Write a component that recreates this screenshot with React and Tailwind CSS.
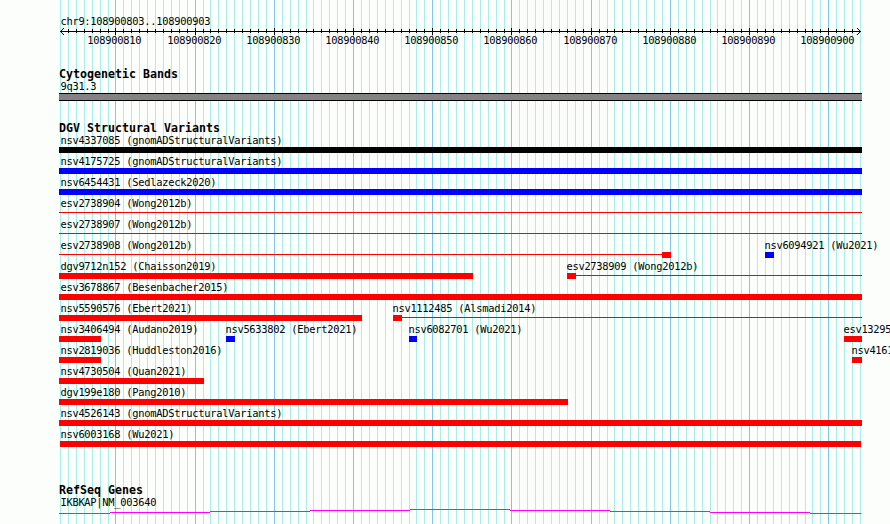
import React from "react";

const GRID = Array.from({ length: 102 }, (_, k) => ({
  x: 60 + Math.round((800 / 101) * k),
  major: k % 10 === 7,
  pos: 108900803 + k,
}));

const RED = "bg-[#ff0000]";
const BLUE = "bg-[#0000ff]";
const BLACK = "bg-black";

// Each feature: label, label x, then segments [start, end, colour, thin]
const ROWS = [
  [{ t: "nsv4337085 (gnomADStructuralVariants)", x: 60, s: [[59, 862, BLACK]] }],
  [{ t: "nsv4175725 (gnomADStructuralVariants)", x: 60, s: [[59, 862, BLUE]] }],
  [{ t: "nsv6454431 (Sedlazeck2020)", x: 60, s: [[59, 862, BLUE]] }],
  [{ t: "esv2738904 (Wong2012b)", x: 60, s: [[59, 862, RED, true]] }],
  [{ t: "esv2738907 (Wong2012b)", x: 60, s: [[59, 862, RED, true]] }],
  [
    { t: "esv2738908 (Wong2012b)", x: 60, s: [[59, 662, RED, true], [662, 671, RED]] },
    { t: "nsv6094921 (Wu2021)", x: 764, s: [[765, 774, BLUE]] },
  ],
  [
    { t: "dgv9712n152 (Chaisson2019)", x: 60, s: [[59, 473, RED]] },
    { t: "esv2738909 (Wong2012b)", x: 566, s: [[567, 576, RED], [576, 862, RED, true]] },
  ],
  [{ t: "esv3678867 (Besenbacher2015)", x: 60, s: [[59, 862, RED]] }],
  [
    { t: "nsv5590576 (Ebert2021)", x: 60, s: [[59, 362, RED]] },
    { t: "nsv1112485 (Alsmadi2014)", x: 392, s: [[393, 402, RED], [402, 862, RED, true]] },
  ],
  [
    { t: "nsv3406494 (Audano2019)", x: 60, s: [[59, 101, RED]] },
    { t: "nsv5633802 (Ebert2021)", x: 225, s: [[226, 235, BLUE]] },
    { t: "nsv6082701 (Wu2021)", x: 408, s: [[409, 417, BLUE]] },
    { t: "esv13295", x: 843, s: [[844, 862, RED]] },
  ],
  [
    { t: "nsv2819036 (Huddleston2016)", x: 60, s: [[59, 101, RED]] },
    { t: "nsv4161", x: 851, s: [[852, 862, RED]] },
  ],
  [{ t: "nsv4730504 (Quan2021)", x: 60, s: [[59, 204, RED]] }],
  [{ t: "dgv199e180 (Pang2010)", x: 60, s: [[59, 568, RED]] }],
  [{ t: "nsv4526143 (gnomADStructuralVariants)", x: 60, s: [[59, 862, RED]] }],
  [{ t: "nsv6003168 (Wu2021)", x: 60, s: [[60, 861, RED]] }],
];

function GridLines() {
  return (
    <svg className="absolute inset-0" width="890" height="524" shapeRendering="crispEdges" aria-hidden="true">
      {GRID.map((g) => (
        <rect key={g.pos} x={g.x} y="0" width="1" height="524" fill={g.major ? "#7ec8ea" : "#a9eee8"} />
      ))}
    </svg>
  );
}

function Heading({ children }) {
  return (
    <h2 className="h-3 pl-[59px] text-[11.63px] leading-[10px] font-bold tracking-normal whitespace-pre">
      {children}
    </h2>
  );
}

function Ruler() {
  return (
    <div className="relative h-[22px]">
      <svg className="block" width="890" height="9" viewBox="0 27 890 9" shapeRendering="crispEdges">
        <rect x="60" y="31" width="801" height="1" />
        {GRID.slice(1, -1).map((g) => (
          <rect key={g.pos} x={g.x} y={g.major ? 28 : 29} width="1" height={g.major ? 7 : 4} />
        ))}
        {[1, 2, 3].map((d) => (
          <g key={d}>
            <rect x={60 + d} y={31 - d} width="1" height="1" />
            <rect x={60 + d} y={31 + d} width="1" height="1" />
            <rect x={860 - d} y={31 - d} width="1" height="1" />
            <rect x={860 - d} y={31 + d} width="1" height="1" />
          </g>
        ))}
      </svg>
      {GRID.filter((g) => g.major).map((g) => (
        <span key={g.pos} className="absolute top-2 leading-[10px]" style={{ left: g.x - 27.7 }}>
          {g.pos}
        </span>
      ))}
    </div>
  );
}

function Row({ features }) {
  return (
    <div className="relative h-[21px]">
      {features.map((f) => (
        <React.Fragment key={f.t}>
          <span className="absolute top-0 leading-[10px] whitespace-pre" style={{ left: f.x + 0.4 }}>
            {f.t}
          </span>
          {f.s.map(([a, b, color, thin]) => (
            <span
              key={a}
              className={`absolute ${thin ? "top-[14px] h-px" : "top-[12px] h-[6px]"} ${color}`}
              style={{ left: a, width: b - a }}
            />
          ))}
        </React.Fragment>
      ))}
    </div>
  );
}

export default function App() {
  return (
    <main className="relative h-[524px] w-[890px] overflow-hidden bg-[#fcfefc] font-['DejaVu_Sans_Mono',monospace] text-[10.4px] tracking-[-0.26px] text-black">
      <GridLines />
      <div className="relative flex flex-col">
        <div className="mt-4 mb-[-1px] h-3 pl-[60.4px] leading-[10px]">chr9:108900803..108900903</div>
        <Ruler />

        <section className="mt-5">
          <Heading>Cytogenetic Bands</Heading>
          <div className="h-3 pl-[60.4px] leading-[10px]">9q31.3</div>
          <div className="ml-[59px] h-2 w-[803px] border-y border-black bg-[#848284]" />
        </section>

        <section className="mt-[22px]">
          <Heading>DGV Structural Variants</Heading>
          {ROWS.map((r, i) => (
            <Row key={i} features={r} />
          ))}
        </section>

        <section className="mt-[35px]">
          <Heading>RefSeq Genes</Heading>
          <div className="h-3 pl-[60.4px] leading-[10px]">IKBKAP|NM_003640</div>
          <svg className="block" width="890" height="15" viewBox="0 509 890 15" shapeRendering="crispEdges">
            {[
              [59, 110, 513],
              [110, 210, 512],
              [210, 310, 511],
              [310, 410, 510],
              [410, 510, 509],
              [510, 610, 510],
              [610, 710, 511],
              [710, 810, 512],
              [810, 861, 513],
            ].map(([a, b, y]) => (
              <rect key={a} x={a} y={y} width={b - a} height="1" fill="#ff00ff" />
            ))}
          </svg>
        </section>
      </div>
    </main>
  );
}
